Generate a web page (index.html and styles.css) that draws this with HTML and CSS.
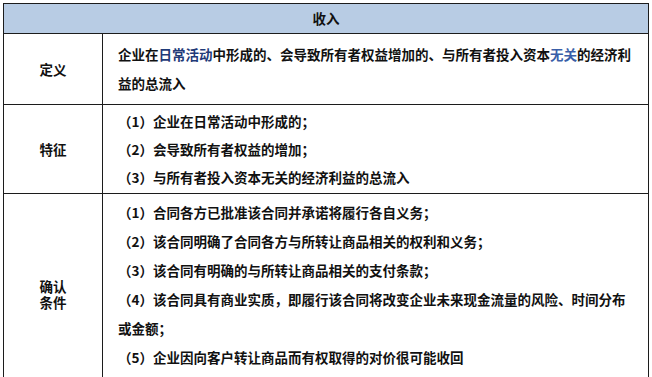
FILE: index.html
```html
<!DOCTYPE html>
<html lang="zh-CN">
<head>
    <meta charset="UTF-8">
    <meta name="viewport" content="width=device-width, initial-scale=1.0">
    <title>收入</title>
    <link rel="stylesheet" href="styles.css">
</head>
<body>
    <table class="info-table">
        <colgroup>
            <col class="col-label">
            <col class="col-text">
        </colgroup>
        <thead>
            <tr>
                <th colspan="2">收入</th>
            </tr>
        </thead>
        <tbody>
            <tr class="row-def">
                <td class="label">定义</td>
                <td class="text">企业在<span class="hl">日常活动</span>中形成的、会导致所有者权益增加的、与所有者投入资本<span class="hl hl-light">无关</span>的经济利益的总流入</td>
            </tr>
            <tr class="row-feat">
                <td class="label">特征</td>
                <td class="text">
                    <p>（1）企业在日常活动中形成的；</p>
                    <p>（2）会导致所有者权益的增加；</p>
                    <p>（3）与所有者投入资本无关的经济利益的总流入</p>
                </td>
            </tr>
            <tr class="row-cond">
                <td class="label label-tight">确认<br>条件</td>
                <td class="text">
                    <p>（1）合同各方已批准该合同并承诺将履行各自义务；</p>
                    <p>（2）该合同明确了合同各方与所转让商品相关的权利和义务；</p>
                    <p>（3）该合同有明确的与所转让商品相关的支付条款；</p>
                    <p>（4）该合同具有商业实质，即履行该合同将改变企业未来现金流量的风险、时间分布或金额；</p>
                    <p>（5）企业因向客户转让商品而有权取得的对价很可能收回</p>
                </td>
            </tr>
        </tbody>
    </table>
</body>
</html>
```

FILE: styles.css
```css
body {
  margin: 0;
  padding: 3px;
  background-color: #fff;
  font-family: "Noto Sans CJK SC", "Noto Sans", sans-serif;
  font-size: 13.5px;
  font-weight: 700;
  color: #111;
}

/* table */

.info-table {
  width: 646px;
  border-collapse: collapse;
  table-layout: fixed;
  border: 1px solid #1c1c1c;
}

.info-table .col-label {
  width: 99px;
}

.info-table th,
.info-table td {
  border: 1px solid #1c1c1c;
}

.info-table th {
  background-color: #b8cce4;
  line-height: 29px;
  padding: 0;
  font-weight: 700;
}

.info-table td {
  vertical-align: middle;
}

.info-table .label {
  text-align: center;
  padding: 0;
}

.info-table .label-tight {
  line-height: 16px;
}

.info-table .text {
  padding: 0 12px 0 15px;
  line-height: 29px;
}

.info-table .text p {
  margin: 0;
}

/* rows */

.row-def .text {
  padding-top: 6px;
  padding-bottom: 6px;
}

.row-feat .text {
  line-height: 28px;
  padding-top: 2px;
  padding-bottom: 2px;
}

.row-cond .text {
  padding-top: 4px;
  padding-bottom: 22px;
}

.hl {
  color: #1f3a78;
}

.hl-light {
  color: #3a5fa8;
}
```
